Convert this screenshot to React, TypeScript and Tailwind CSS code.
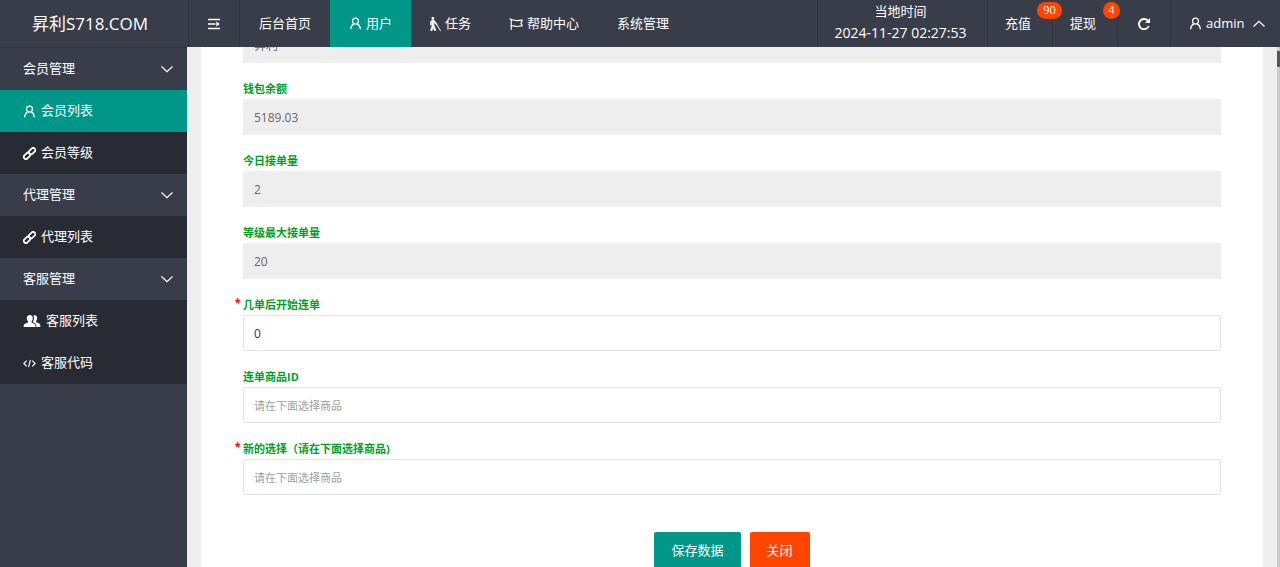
import type { ReactNode } from "react";
import { FaBlind } from "react-icons/fa";

function UserIcon() {
  return (
    <svg viewBox="0 0 14 14" className="size-[13px]" fill="none" stroke="currentColor" strokeWidth="1.3" strokeLinecap="round">
      <circle cx="7" cy="4.4" r="3.2" />
      <path d="M1.8 12.8c.3-2.7 1.5-4.6 3.5-5.4M12.2 12.8c-.3-2.7-1.5-4.6-3.5-5.4" />
    </svg>
  );
}

function LinkIcon() {
  return (
    <svg viewBox="0 0 14 14" className="size-[13px]" fill="none" stroke="currentColor" strokeWidth="1.9">
      <rect x="5.9" y="2.2" width="7.8" height="4.6" rx="2.3" transform="rotate(-45 9.8 4.5)" />
      <rect x="0.400" y="7.200" width="7.8" height="4.6" rx="2.3" transform="rotate(-45 4.300 9.500)" />
    </svg>
  );
}

function FlagIcon() {
  return (
    <svg viewBox="0 0 14 14" className="size-[14px]" fill="none" stroke="currentColor" strokeWidth="1.2" strokeLinecap="round" strokeLinejoin="round">
      <path d="M.8 2h1.400v10.500M2.200 3.200c2-1 3.800.7 6 .5 1.700-.2 3.200-.8 5-.5l-1.200 2.900 1.200 2.900c-1.800-.3-3.300.3-5 .5-2.200.2-4-1.500-6-.5" />
    </svg>
  );
}

function FoldIcon() {
  return (
    <svg viewBox="0 0 14 14" className="size-[14px]" fill="none" stroke="currentColor" strokeWidth="1.7">
      <path d="M1 2.500h12M1 7h7.500M1 11.500h12" />
      <path d="M9.300 4.500 12.900 7 9.300 9.500z" fill="currentColor" stroke="none" />
    </svg>
  );
}

function RefreshIcon() {
  return (
    <svg viewBox="0 0 14 14" className="size-[14px]" fill="none" stroke="currentColor" strokeWidth="1.8">
      <path d="M11.800 9A5.100 5.100 0 1 1 10.800 3.600" />
      <path d="M13 1v5H8z" fill="currentColor" stroke="none" />
    </svg>
  );
}

function GroupIcon() {
  return (
    <svg viewBox="0 0 18 14" className="h-[14px] w-[18px]" fill="currentColor">
      <path d="M6.800 1c1.900 0 3 1.400 3 3.200 0 1.300-.5 2.500-1.300 3.200v1.100c1.800.8 3.700 1.400 3.900 2.600l.2 1.900H.6l.2-1.900c.2-1.200 2.200-1.800 4.300-2.600V7.400C4.300 6.700 3.800 5.500 3.800 4.200 3.800 2.400 4.900 1 6.800 1z" />
      <path d="M10.300 1.500c.3-.2.700-.3 1.200-.3 1.700 0 2.700 1.300 2.700 2.900 0 1.200-.4 2.200-1.100 2.900v1.200c1.900.8 3.900 1.300 4.100 2.500l.2 2.300h-3.900c-.1-2.200-.7-3.700-3.600-4.900.7-1.100 1.100-2.400 1.100-3.800 0-1.100-.2-2-.7-2.800z" />
    </svg>
  );
}

function CodeIcon() {
  return (
    <svg viewBox="0 0 14 14" className="size-[13px]" fill="none" stroke="currentColor" strokeWidth="1.2">
      <path d="M4 3.800.9 7 4 10.200M10 3.800 13.100 7 10 10.200M8 3 6 11" />
    </svg>
  );
}

function Chevron({ up = false }: { up?: boolean }) {
  return (
    <svg viewBox="0 0 14 14" className="size-[14px] shrink-0" fill="none" stroke="currentColor" strokeWidth="1.2">
      <path d={up ? "M1.500 9.500 7 4.300l5.500 5.200" : "M1.500 4.500 7 9.700l5.500-5.200"} />
    </svg>
  );
}

const nav = [
  { label: "后台首页", icon: null },
  { label: "用户", icon: <UserIcon />, active: true },
  { label: "任务", icon: <FaBlind className="h-[14px] w-[11px]" stroke="currentColor" strokeWidth="16" /> },
  { label: "帮助中心", icon: <FlagIcon /> },
  { label: "系统管理", icon: null },
];

const menu: { title: string; items: { label: string; icon: ReactNode; active?: boolean }[] }[] = [
  {
    title: "会员管理",
    items: [
      { label: "会员列表", icon: <UserIcon />, active: true },
      { label: "会员等级", icon: <LinkIcon /> },
    ],
  },
  {
    title: "代理管理",
    items: [{ label: "代理列表", icon: <LinkIcon /> }],
  },
  {
    title: "客服管理",
    items: [
      { label: "客服列表", icon: <GroupIcon /> },
      { label: "客服代码", icon: <CodeIcon /> },
    ],
  },
];

const fields = [
  { id: "balance", label: "钱包余额", value: "5189.03", disabled: true },
  { id: "today", label: "今日接单量", value: "2", disabled: true },
  { id: "max", label: "等级最大接单量", value: "20", disabled: true },
  { id: "start", label: "几单后开始连单", value: "0", required: true },
  { id: "goods", label: "连单商品ID", placeholder: "请在下面选择商品" },
  { id: "choice", label: "新的选择（请在下面选择商品)", placeholder: "请在下面选择商品", required: true },
];

const inputClass =
  "block h-9 w-full rounded-xs border border-[#e6e6e6] bg-white px-[10px] text-xs text-[#333] outline-none placeholder:text-[11px] placeholder:text-[#a0a0a0] disabled:border-[#eee] disabled:bg-[#eee] disabled:text-[#666]";

function Header() {
  return (
    <header className="flex h-[47px] shrink-0 items-stretch bg-[#393d49] text-white">
      <a href="#" className="flex w-[188px] shrink-0 items-center justify-center pr-2 text-[17px]">
        昇利S718.COM
      </a>
      <button aria-label="折叠菜单" className="flex w-[52px] items-center justify-center border-x border-[#32353f]">
        <FoldIcon />
      </button>
      <nav className="flex">
        {nav.map((n) => (
          <a
            key={n.label}
            href="#"
            className={
              n.active
                ? "flex items-center gap-1 bg-[#009688] px-[19px] whitespace-nowrap"
                : "flex items-center gap-1 px-[19px] whitespace-nowrap"
            }
          >
            {n.icon}
            {n.label}
          </a>
        ))}
      </nav>
      <div className="ml-auto flex whitespace-nowrap">
        <div className="flex w-[170px] flex-col items-center border-l border-[#32353f] pr-1 text-center leading-[22px]">
          <span>当地时间</span>
          <time className="text-sm leading-[22px]">2024-11-27 02:27:53</time>
        </div>
        <a href="#" className="relative flex w-[65px] items-center border-l border-[#32353f] pl-[17px]">
          充值
          <span className="absolute top-[2px] right-[-10px] z-10 flex h-[17px] w-[25px] items-center justify-center rounded-full bg-[#ff4500] text-[11px]">
            90
          </span>
        </a>
        <a href="#" className="relative flex w-[65px] items-center border-l border-[#32353f] pl-[17px]">
          提现
          <span className="absolute top-[2px] right-[-3px] z-10 flex size-[17px] items-center justify-center rounded-full bg-[#ff4500] text-[11px]">
            4
          </span>
        </a>
        <button aria-label="刷新" className="flex w-[53px] items-center justify-center border-l border-[#32353f]">
          <RefreshIcon />
        </button>
        <button className="flex w-[110px] items-center gap-1 border-l border-[#32353f] pl-[18px]">
          <UserIcon />
          admin
          <span className="ml-1">
            <Chevron up />
          </span>
        </button>
      </div>
    </header>
  );
}

function Sidebar() {
  return (
    <aside className="w-[187px] shrink-0 border-t border-[#30333d] bg-[#393d49] text-white">
      {menu.map((group) => (
        <section key={group.title}>
          <button className="flex h-[42px] w-full items-center justify-between pr-[13px] pl-[23px]">
            {group.title}
            <Chevron />
          </button>
          <ul className="bg-[#282b33]">
            {group.items.map((item) => (
              <li key={item.label}>
                <a
                  href="#"
                  className={
                    item.active
                      ? "flex h-[42px] items-center gap-[5px] bg-[#009688] pl-[23px]"
                      : "flex h-[42px] items-center gap-[5px] pl-[23px]"
                  }
                >
                  {item.icon}
                  {item.label}
                </a>
              </li>
            ))}
          </ul>
        </section>
      ))}
    </aside>
  );
}

export default function App() {
  return (
    <div className="flex h-screen flex-col overflow-hidden font-['Open_Sans','Noto_Sans_CJK_SC',sans-serif] text-[13px]">
      <Header />
      <div className="flex min-h-0 flex-1">
        <Sidebar />
        <main className="flex min-w-0 flex-1 overflow-hidden bg-[#eee] pl-[14px]">
          {/* the form is scrolled, so its first field sits partly under the header */}
          <form className="-mt-5 min-w-0 flex-1 bg-white px-[42px]">
            <input aria-label="用户名" defaultValue="昇利" disabled className={inputClass} />
            {fields.map((f) => (
              <div key={f.id} className="relative mt-[18px]">
                {f.required && (
                  <span className="absolute -top-px -left-2 text-[10px] leading-3 font-bold text-[#f00]">*</span>
                )}
                <label htmlFor={f.id} className="block h-[18px] text-[11px] leading-4 font-bold text-[#00a123]">
                  {f.label}
                </label>
                <input
                  id={f.id}
                  defaultValue={f.value}
                  placeholder={f.placeholder}
                  disabled={f.disabled}
                  className={inputClass}
                />
              </div>
            ))}
            <div className="mt-[37px] flex justify-center gap-[9px] pb-10 text-white">
              <button type="button" className="h-[37px] rounded-xs bg-[#009688] px-[17px]">
                保存数据
              </button>
              <button type="button" className="h-[37px] rounded-xs bg-[#ff4500] px-[17px]">
                关闭
              </button>
            </div>
          </form>
          <div className="w-[14px] shrink-0" />
          <div className="w-[3px] shrink-0 bg-[#cdcdcd] pt-1">
            <div className="h-4 bg-[#555]" />
          </div>
        </main>
      </div>
    </div>
  );
}
